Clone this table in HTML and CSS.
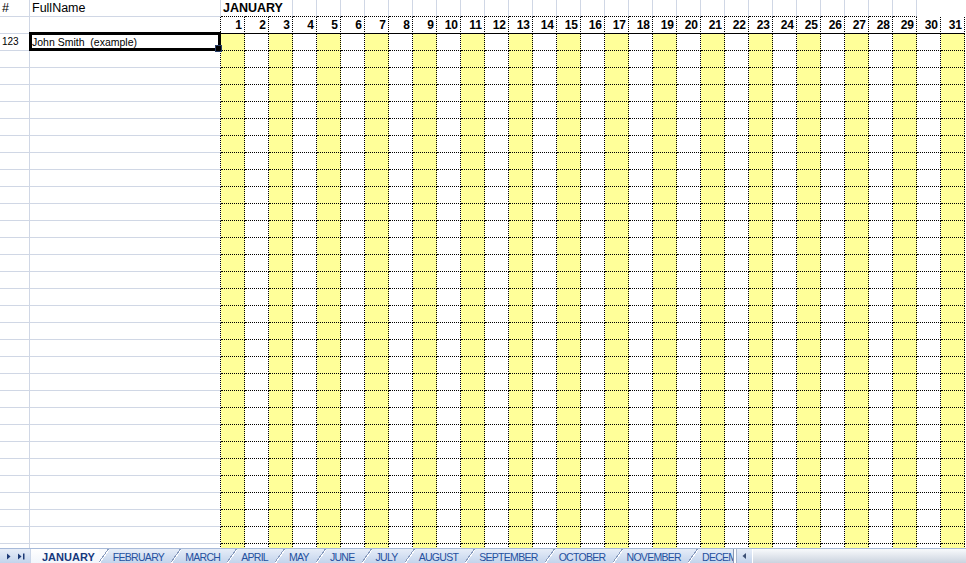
FILE: index.html
```html
<!DOCTYPE html>
<html>
<head>
<meta charset="utf-8">
<link rel="stylesheet" href="styles.css">
</head>
<body>
<div class="app">
<div class="sheet">
<div class="row r1"><span class="hash">#</span><span class="fn">FullName</span><span class="title">JANUARY</span><span class="under"></span><span></span><span></span><span></span><span></span><span></span><span></span><span></span><span></span><span></span><span></span><span></span><span></span><span></span><span></span><span></span><span></span><span></span><span></span><span></span><span></span><span></span><span></span><span></span><span></span><span></span><span></span><span></span></div>
<div class="row r2"><span></span><span></span><span>1</span><span>2</span><span>3</span><span>4</span><span>5</span><span>6</span><span>7</span><span>8</span><span>9</span><span>10</span><span>11</span><span>12</span><span>13</span><span>14</span><span>15</span><span>16</span><span>17</span><span>18</span><span>19</span><span>20</span><span>21</span><span>22</span><span>23</span><span>24</span><span>25</span><span>26</span><span>27</span><span>28</span><span>29</span><span>30</span><span>31</span></div>
<div class="row data"><span class="num">123</span><span class="name sel">John Smith&nbsp; (example)</span><span></span><span></span><span></span><span></span><span></span><span></span><span></span><span></span><span></span><span></span><span></span><span></span><span></span><span></span><span></span><span></span><span></span><span></span><span></span><span></span><span></span><span></span><span></span><span></span><span></span><span></span><span></span><span></span><span></span><span></span><span></span></div>
<div class="row data"><span></span><span></span><span></span><span></span><span></span><span></span><span></span><span></span><span></span><span></span><span></span><span></span><span></span><span></span><span></span><span></span><span></span><span></span><span></span><span></span><span></span><span></span><span></span><span></span><span></span><span></span><span></span><span></span><span></span><span></span><span></span><span></span><span></span></div>
<div class="row data"><span></span><span></span><span></span><span></span><span></span><span></span><span></span><span></span><span></span><span></span><span></span><span></span><span></span><span></span><span></span><span></span><span></span><span></span><span></span><span></span><span></span><span></span><span></span><span></span><span></span><span></span><span></span><span></span><span></span><span></span><span></span><span></span><span></span></div>
<div class="row data"><span></span><span></span><span></span><span></span><span></span><span></span><span></span><span></span><span></span><span></span><span></span><span></span><span></span><span></span><span></span><span></span><span></span><span></span><span></span><span></span><span></span><span></span><span></span><span></span><span></span><span></span><span></span><span></span><span></span><span></span><span></span><span></span><span></span></div>
<div class="row data"><span></span><span></span><span></span><span></span><span></span><span></span><span></span><span></span><span></span><span></span><span></span><span></span><span></span><span></span><span></span><span></span><span></span><span></span><span></span><span></span><span></span><span></span><span></span><span></span><span></span><span></span><span></span><span></span><span></span><span></span><span></span><span></span><span></span></div>
<div class="row data"><span></span><span></span><span></span><span></span><span></span><span></span><span></span><span></span><span></span><span></span><span></span><span></span><span></span><span></span><span></span><span></span><span></span><span></span><span></span><span></span><span></span><span></span><span></span><span></span><span></span><span></span><span></span><span></span><span></span><span></span><span></span><span></span><span></span></div>
<div class="row data"><span></span><span></span><span></span><span></span><span></span><span></span><span></span><span></span><span></span><span></span><span></span><span></span><span></span><span></span><span></span><span></span><span></span><span></span><span></span><span></span><span></span><span></span><span></span><span></span><span></span><span></span><span></span><span></span><span></span><span></span><span></span><span></span><span></span></div>
<div class="row data"><span></span><span></span><span></span><span></span><span></span><span></span><span></span><span></span><span></span><span></span><span></span><span></span><span></span><span></span><span></span><span></span><span></span><span></span><span></span><span></span><span></span><span></span><span></span><span></span><span></span><span></span><span></span><span></span><span></span><span></span><span></span><span></span><span></span></div>
<div class="row data"><span></span><span></span><span></span><span></span><span></span><span></span><span></span><span></span><span></span><span></span><span></span><span></span><span></span><span></span><span></span><span></span><span></span><span></span><span></span><span></span><span></span><span></span><span></span><span></span><span></span><span></span><span></span><span></span><span></span><span></span><span></span><span></span><span></span></div>
<div class="row data"><span></span><span></span><span></span><span></span><span></span><span></span><span></span><span></span><span></span><span></span><span></span><span></span><span></span><span></span><span></span><span></span><span></span><span></span><span></span><span></span><span></span><span></span><span></span><span></span><span></span><span></span><span></span><span></span><span></span><span></span><span></span><span></span><span></span></div>
<div class="row data"><span></span><span></span><span></span><span></span><span></span><span></span><span></span><span></span><span></span><span></span><span></span><span></span><span></span><span></span><span></span><span></span><span></span><span></span><span></span><span></span><span></span><span></span><span></span><span></span><span></span><span></span><span></span><span></span><span></span><span></span><span></span><span></span><span></span></div>
<div class="row data"><span></span><span></span><span></span><span></span><span></span><span></span><span></span><span></span><span></span><span></span><span></span><span></span><span></span><span></span><span></span><span></span><span></span><span></span><span></span><span></span><span></span><span></span><span></span><span></span><span></span><span></span><span></span><span></span><span></span><span></span><span></span><span></span><span></span></div>
<div class="row data"><span></span><span></span><span></span><span></span><span></span><span></span><span></span><span></span><span></span><span></span><span></span><span></span><span></span><span></span><span></span><span></span><span></span><span></span><span></span><span></span><span></span><span></span><span></span><span></span><span></span><span></span><span></span><span></span><span></span><span></span><span></span><span></span><span></span></div>
<div class="row data"><span></span><span></span><span></span><span></span><span></span><span></span><span></span><span></span><span></span><span></span><span></span><span></span><span></span><span></span><span></span><span></span><span></span><span></span><span></span><span></span><span></span><span></span><span></span><span></span><span></span><span></span><span></span><span></span><span></span><span></span><span></span><span></span><span></span></div>
<div class="row data"><span></span><span></span><span></span><span></span><span></span><span></span><span></span><span></span><span></span><span></span><span></span><span></span><span></span><span></span><span></span><span></span><span></span><span></span><span></span><span></span><span></span><span></span><span></span><span></span><span></span><span></span><span></span><span></span><span></span><span></span><span></span><span></span><span></span></div>
<div class="row data"><span></span><span></span><span></span><span></span><span></span><span></span><span></span><span></span><span></span><span></span><span></span><span></span><span></span><span></span><span></span><span></span><span></span><span></span><span></span><span></span><span></span><span></span><span></span><span></span><span></span><span></span><span></span><span></span><span></span><span></span><span></span><span></span><span></span></div>
<div class="row data"><span></span><span></span><span></span><span></span><span></span><span></span><span></span><span></span><span></span><span></span><span></span><span></span><span></span><span></span><span></span><span></span><span></span><span></span><span></span><span></span><span></span><span></span><span></span><span></span><span></span><span></span><span></span><span></span><span></span><span></span><span></span><span></span><span></span></div>
<div class="row data"><span></span><span></span><span></span><span></span><span></span><span></span><span></span><span></span><span></span><span></span><span></span><span></span><span></span><span></span><span></span><span></span><span></span><span></span><span></span><span></span><span></span><span></span><span></span><span></span><span></span><span></span><span></span><span></span><span></span><span></span><span></span><span></span><span></span></div>
<div class="row data"><span></span><span></span><span></span><span></span><span></span><span></span><span></span><span></span><span></span><span></span><span></span><span></span><span></span><span></span><span></span><span></span><span></span><span></span><span></span><span></span><span></span><span></span><span></span><span></span><span></span><span></span><span></span><span></span><span></span><span></span><span></span><span></span><span></span></div>
<div class="row data"><span></span><span></span><span></span><span></span><span></span><span></span><span></span><span></span><span></span><span></span><span></span><span></span><span></span><span></span><span></span><span></span><span></span><span></span><span></span><span></span><span></span><span></span><span></span><span></span><span></span><span></span><span></span><span></span><span></span><span></span><span></span><span></span><span></span></div>
<div class="row data"><span></span><span></span><span></span><span></span><span></span><span></span><span></span><span></span><span></span><span></span><span></span><span></span><span></span><span></span><span></span><span></span><span></span><span></span><span></span><span></span><span></span><span></span><span></span><span></span><span></span><span></span><span></span><span></span><span></span><span></span><span></span><span></span><span></span></div>
<div class="row data"><span></span><span></span><span></span><span></span><span></span><span></span><span></span><span></span><span></span><span></span><span></span><span></span><span></span><span></span><span></span><span></span><span></span><span></span><span></span><span></span><span></span><span></span><span></span><span></span><span></span><span></span><span></span><span></span><span></span><span></span><span></span><span></span><span></span></div>
<div class="row data"><span></span><span></span><span></span><span></span><span></span><span></span><span></span><span></span><span></span><span></span><span></span><span></span><span></span><span></span><span></span><span></span><span></span><span></span><span></span><span></span><span></span><span></span><span></span><span></span><span></span><span></span><span></span><span></span><span></span><span></span><span></span><span></span><span></span></div>
<div class="row data"><span></span><span></span><span></span><span></span><span></span><span></span><span></span><span></span><span></span><span></span><span></span><span></span><span></span><span></span><span></span><span></span><span></span><span></span><span></span><span></span><span></span><span></span><span></span><span></span><span></span><span></span><span></span><span></span><span></span><span></span><span></span><span></span><span></span></div>
<div class="row data"><span></span><span></span><span></span><span></span><span></span><span></span><span></span><span></span><span></span><span></span><span></span><span></span><span></span><span></span><span></span><span></span><span></span><span></span><span></span><span></span><span></span><span></span><span></span><span></span><span></span><span></span><span></span><span></span><span></span><span></span><span></span><span></span><span></span></div>
<div class="row data"><span></span><span></span><span></span><span></span><span></span><span></span><span></span><span></span><span></span><span></span><span></span><span></span><span></span><span></span><span></span><span></span><span></span><span></span><span></span><span></span><span></span><span></span><span></span><span></span><span></span><span></span><span></span><span></span><span></span><span></span><span></span><span></span><span></span></div>
<div class="row data"><span></span><span></span><span></span><span></span><span></span><span></span><span></span><span></span><span></span><span></span><span></span><span></span><span></span><span></span><span></span><span></span><span></span><span></span><span></span><span></span><span></span><span></span><span></span><span></span><span></span><span></span><span></span><span></span><span></span><span></span><span></span><span></span><span></span></div>
<div class="row data"><span></span><span></span><span></span><span></span><span></span><span></span><span></span><span></span><span></span><span></span><span></span><span></span><span></span><span></span><span></span><span></span><span></span><span></span><span></span><span></span><span></span><span></span><span></span><span></span><span></span><span></span><span></span><span></span><span></span><span></span><span></span><span></span><span></span></div>
<div class="row data"><span></span><span></span><span></span><span></span><span></span><span></span><span></span><span></span><span></span><span></span><span></span><span></span><span></span><span></span><span></span><span></span><span></span><span></span><span></span><span></span><span></span><span></span><span></span><span></span><span></span><span></span><span></span><span></span><span></span><span></span><span></span><span></span><span></span></div>
<div class="row data"><span></span><span></span><span></span><span></span><span></span><span></span><span></span><span></span><span></span><span></span><span></span><span></span><span></span><span></span><span></span><span></span><span></span><span></span><span></span><span></span><span></span><span></span><span></span><span></span><span></span><span></span><span></span><span></span><span></span><span></span><span></span><span></span><span></span></div>
<div class="row data"><span></span><span></span><span></span><span></span><span></span><span></span><span></span><span></span><span></span><span></span><span></span><span></span><span></span><span></span><span></span><span></span><span></span><span></span><span></span><span></span><span></span><span></span><span></span><span></span><span></span><span></span><span></span><span></span><span></span><span></span><span></span><span></span><span></span></div>
</div>
<div class="tabbar">
  <div class="nav">
    <svg width="30" height="14" viewBox="0 0 30 14"><polygon points="7,4.5 10.5,7.5 7,10.5" fill="#1d3a76"/><polygon points="18,4.5 21.5,7.5 18,10.5" fill="#1d3a76"/><rect x="23" y="4.5" width="1.5" height="6" fill="#1d3a76"/></svg>
  </div>
  <div class="tabs">
    <span class="tab active">JANUARY</span>
    <span class="tab">FEBRUARY</span>
    <span class="tab">MARCH</span>
    <span class="tab">APRIL</span>
    <span class="tab">MAY</span>
    <span class="tab">JUNE</span>
    <span class="tab">JULY</span>
    <span class="tab">AUGUST</span>
    <span class="tab">SEPTEMBER</span>
    <span class="tab">OCTOBER</span>
    <span class="tab">NOVEMBER</span>
    <span class="tab">DECEMBER</span>
  </div>
  <div class="split"></div>
  <div class="sbtn"><svg width="15" height="14" viewBox="0 0 15 14"><polygon points="9,4 5.5,7 9,10" fill="#3b4f74"/></svg></div>
  <div class="track"></div>
</div>
</div>
</body>
</html>
```
FILE: styles.css
```css
* { box-sizing: border-box; }
html, body { margin: 0; padding: 0; }
body {
  width: 966px;
  height: 563px;
  overflow: hidden;
  background: #fff;
  font-family: "Liberation Sans", Arial, sans-serif;
  color: #000;
}
.app { display: flex; flex-direction: column; height: 563px; }
.sheet { height: 548px; overflow: hidden; flex: none; }

.row {
  display: grid;
  grid-template-columns: 30px 191px repeat(31, 24px);
  height: 17px;
}
.row > span {
  display: block;
  height: 17px;
  border-right: 1px solid #d0d7e5;
  border-bottom: 1px solid #d0d7e5;
  line-height: 16px;
  white-space: nowrap;
  overflow: visible;
}

/* row 1 : titles */
.r1 > span:nth-child(n+3) { border-bottom: 1px dotted #000; }
.r1 .title, .r1 .under { border-right-color: transparent; }
.hash, .fn { font-size: 12.5px; padding-left: 2px; }
.title { font-size: 12.5px; font-weight: bold; padding-left: 2px; position: relative; z-index: 1; }

/* row 2 : day numbers */
.r2 > span:nth-child(n+2) { border-right: 1px dotted #000; }
.r2 > span:nth-child(n+3) {
  border-bottom: 1px solid #000;
  font-size: 12px;
  font-weight: bold;
  text-align: right;
  padding-right: 2px;
}

/* data rows */
.data > span:nth-child(n+2) { border-right: 1px dotted #000; }
.data > span:nth-child(n+3) { border-bottom: 1px dotted #000; }
.data > span:nth-child(2n+3) { background: #ffff99; }

.num { font-size: 10px; padding-left: 2px; }
.name { font-size: 10.5px; padding-left: 2px; }

.sel { position: relative; }
.sel::before {
  content: "";
  position: absolute;
  left: -1px;
  top: -2px;
  right: -1px;
  bottom: -1px;
  border: 3px solid #000;
  z-index: 2;
}
.sel::after {
  content: "";
  position: absolute;
  right: -2px;
  bottom: -2px;
  width: 5px;
  height: 5px;
  background: #000;
  border: 1px solid #2a3f66;
  z-index: 3;
}

/* sheet tab bar */
.tabbar {
  flex: none;
  height: 15px;
  display: flex;
  border-top: 1px solid #a7bad9;
  background: linear-gradient(#e6edf8, #c3d4ec);
  overflow: hidden;
}
.nav { width: 30px; flex: none; }
.nav svg { display: block; }
.tabs { width: 703px; flex: none; display: flex; overflow: hidden; }
.tab {
  flex: none;
  position: relative;
  padding: 1px 7px 0 14px;
  font-size: 10.5px;
  letter-spacing: -0.7px;
  line-height: 14px;
  color: #24509f;
  white-space: nowrap;
}
.tab::before {
  content: "";
  position: absolute;
  left: 0;
  top: 0;
  width: 10px;
  height: 100%;
  background: linear-gradient(to bottom right,
    transparent calc(50% - 1px), #8a9dbf calc(50% - 1px), #8a9dbf 50%,
    #ffffff 50%, #ffffff calc(50% + 1px), transparent calc(50% + 1px));
}
.tab.active {
  padding: 1px 4px 0 11px;
  font-size: 11px;
  font-weight: bold;
  letter-spacing: 0;
  color: #16387c;
  background: linear-gradient(#ffffff, #f1f5fb);
  border-left: 1px solid #c9d5e8;
}
.tab.active::before { display: none; }
.tab.active + .tab::before {
  background: linear-gradient(to bottom right,
    #f8fafd calc(50% - 1px), #8a9dbf calc(50% - 1px), #8a9dbf 50%,
    #ffffff 50%, #ffffff calc(50% + 1px), transparent calc(50% + 1px));
}
.split {
  width: 4px;
  flex: none;
  background: #fbfcfe;
  border-left: 1px solid #8797b3;
  border-right: 1px solid #a9b7cd;
}
.sbtn { width: 15px; flex: none; }
.sbtn svg { display: block; }
.track {
  flex: 1;
  border-left: 1px solid #ffffff;
  background: linear-gradient(#f8fafc, #e6eaf0 40%, #cbd3df);
}
```
